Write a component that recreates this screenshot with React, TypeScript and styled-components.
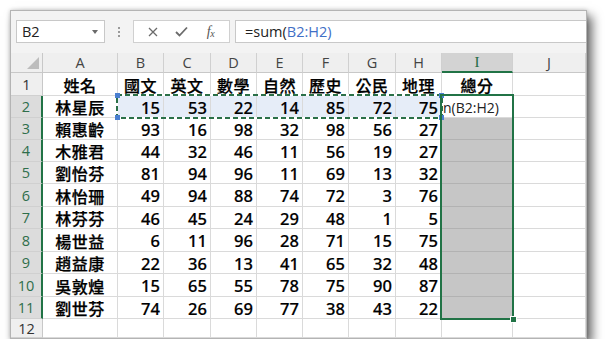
import React from "react";
import styled, { createGlobalStyle } from "styled-components";

const Global = createGlobalStyle`
  html, body { margin: 0; padding: 0; background: #ffffff; }
  body { font-family: "Open Sans", "Noto Sans CJK TC", sans-serif; }
`;

const Window = styled.div`
  margin: 10px 0 0 10px;
  width: 577px;
  height: 329px;
  box-sizing: border-box;
  border: 1px solid #b4b4b4;
  background: #ffffff;
  overflow: hidden;
  display: flex;
  flex-direction: column;
  box-shadow: 5px 6px 10px rgba(0, 0, 0, 0.6), 0 0 4px rgba(0, 0, 0, 0.2);
`;

const FormulaBar = styled.div`
  height: 42px;
  flex: none;
  display: flex;
  align-items: center;
  padding: 0 0 1px 5px;
  background: #f3f3f3;
  box-sizing: border-box;
`;

const NameBox = styled.div`
  width: 89px;
  height: 23px;
  box-sizing: border-box;
  border: 1px solid #c8c8c8;
  background: #ffffff;
  display: flex;
  align-items: center;
  justify-content: space-between;
  padding: 0 6px 0 5px;
  font-size: 14.5px;
  color: #222;
`;

const Caret = styled.span`
  width: 0;
  height: 0;
  border-left: 3.5px solid transparent;
  border-right: 3.5px solid transparent;
  border-top: 4px solid #6a6a6a;
`;

const Grip = styled.div`
  width: 28px;
  display: flex;
  flex-direction: column;
  align-items: center;
  gap: 2px;
`;

const GripDot = styled.span`
  width: 2px;
  height: 2px;
  background: #9a9a9a;
`;

const ButtonBox = styled.div`
  width: 97px;
  height: 23px;
  box-sizing: border-box;
  border: 1px solid #d0d0d0;
  background: #ffffff;
  display: flex;
  align-items: center;
  justify-content: space-around;
  padding: 0 4px;
`;

const IconSlot = styled.span`
  width: 20px;
  height: 20px;
  display: flex;
  align-items: center;
  justify-content: center;
  color: #6b6b6b;
`;

const Fx = styled.span`
  font-family: "Liberation Serif", serif;
  font-style: italic;
  font-size: 14px;
  color: #555;
  letter-spacing: -0.5px;
  & sub {
    font-size: 10px;
    vertical-align: -1px;
  }
`;

const FormulaInput = styled.div`
  flex: 1;
  height: 23px;
  margin-left: 5px;
  box-sizing: border-box;
  border: 1px solid #c8c8c8;
  border-right: none;
  background: #ffffff;
  display: flex;
  align-items: center;
  padding-left: 9px;
  font-size: 14.5px;
  color: #222;
  white-space: pre;
`;

const Ref = styled.span`
  color: #3f6fc6;
`;

const Grid = styled.div`
  flex: 1;
  display: grid;
  grid-template-columns: 32px 75px 46px 47px 46px 46px 46px 47px 46px 71px 1fr;
  grid-template-rows: 20px 23px 22px 22px 22px 22px 23px 22px 23px 22px 23px 22px 1fr;
`;

type Pos = { $r: number; $c: number };

const Cell = styled.div<Pos & { $align?: string; $bg?: string }>`
  grid-row: ${(p) => p.$r};
  grid-column: ${(p) => p.$c};
  box-sizing: border-box;
  border-right: 1px solid ${(p) => (p.$bg === "#c6c6c6" ? "#b2b2b2" : "#dadada")};
  border-bottom: 1px solid ${(p) => (p.$bg === "#c6c6c6" ? "#b2b2b2" : "#dadada")};
  background: ${(p) => p.$bg || "#ffffff"};
  display: flex;
  align-items: center;
  justify-content: ${(p) => p.$align || "flex-end"};
  padding: 1px 3px 0 3px;
  font-family: "Noto Sans", "Noto Sans CJK TC", sans-serif;
  font-size: 16.5px;
  font-weight: 500;
  -webkit-text-stroke: 0.2px #000;
  color: #000;
  white-space: nowrap;
  overflow: visible;
`;

const NameText = styled.span`
  font-family: "Noto Sans CJK TC", sans-serif;
  font-weight: 500;
  font-size: 16px;
  letter-spacing: 0.5px;
  -webkit-text-stroke: 0.25px #000;
`;

const EditText = styled.span`
  font-family: "Open Sans", sans-serif;
  font-size: 14px;
  font-weight: 400;
  -webkit-text-stroke: 0;
  color: #222;
  margin-left: -2px;
`;

const ColHead = styled.div<Pos & { $sel?: boolean }>`
  grid-row: ${(p) => p.$r};
  grid-column: ${(p) => p.$c};
  box-sizing: border-box;
  background: ${(p) => (p.$sel ? "#d3d3d3" : "#efefef")};
  border-right: 1px solid #d0d0d0;
  border-bottom: ${(p) => (p.$sel ? "2px solid #217346" : "1px solid #c8c8c8")};
  display: flex;
  align-items: center;
  justify-content: center;
  font-family: ${(p) => (p.$sel ? '"Liberation Serif", serif' : '"Open Sans", sans-serif')};
  font-size: ${(p) => (p.$sel ? "15px" : "14.5px")};
  color: ${(p) => (p.$sel ? "#216a44" : "#444")};
`;

const RowHead = styled.div<Pos & { $sel?: boolean }>`
  grid-row: ${(p) => p.$r};
  grid-column: ${(p) => p.$c};
  box-sizing: border-box;
  background: ${(p) => (p.$sel ? "#dcdcdc" : "#efefef")};
  border-bottom: 1px solid #d0d0d0;
  border-right: ${(p) => (p.$sel ? "2px solid #217346" : "1px solid #c8c8c8")};
  display: flex;
  align-items: center;
  justify-content: center;
  font-family: "Open Sans", sans-serif;
  font-size: 14.5px;
  line-height: 1;
  padding-top: 2px;
  color: ${(p) => (p.$sel ? "#2f6e4b" : "#333")};
`;

const Corner = styled.div`
  grid-row: 1;
  grid-column: 1;
  box-sizing: border-box;
  background: #efefef;
  border-right: 1px solid #c8c8c8;
  border-bottom: 1px solid #c8c8c8;
  display: flex;
  align-items: flex-end;
  justify-content: flex-end;
  padding: 0 3px 3px 0;
`;

const CornerTriangle = styled.span`
  width: 0;
  height: 0;
  border-left: 12px solid transparent;
  border-bottom: 12px solid #bdbdbd;
`;

const RefRange = styled.div`
  grid-row: 3;
  grid-column: 3 / 10;
  margin: -2px -1px -1px -2px;
  position: relative;
  pointer-events: none;
`;

const Ants = styled.svg`
  position: absolute;
  inset: 0;
  width: 100%;
  height: 100%;
  overflow: visible;
`;

const Handle = styled.span<{ $top?: boolean; $left?: boolean }>`
  position: absolute;
  width: 5px;
  height: 5px;
  background: #4a7fd0;
  ${(p) => (p.$top ? "top: -1px;" : "bottom: -1px;")}
  ${(p) => (p.$left ? "left: -1px;" : "right: -1px;")}
`;

const Selection = styled.div`
  grid-row: 3 / 13;
  grid-column: 10;
  margin: -2px -1px -1px -2px;
  border: 2px solid #217346;
  position: relative;
  pointer-events: none;
`;

const FillHandle = styled.span`
  position: absolute;
  right: -5px;
  bottom: -5px;
  width: 5px;
  height: 5px;
  background: #217346;
  border: 1px solid #ffffff;
`;

const heads = ["姓名", "國文", "英文", "數學", "自然", "歷史", "公民", "地理", "總分"];
const rows: [string, number[]][] = [
  ["林星辰", [15, 53, 22, 14, 85, 72, 75]],
  ["賴惠齡", [93, 16, 98, 32, 98, 56, 27]],
  ["木雅君", [44, 32, 46, 11, 56, 19, 27]],
  ["劉怡芬", [81, 94, 96, 11, 69, 13, 32]],
  ["林怡珊", [49, 94, 88, 74, 72, 3, 76]],
  ["林芬芬", [46, 45, 24, 29, 48, 1, 5]],
  ["楊世益", [6, 11, 96, 28, 71, 15, 75]],
  ["趙益康", [22, 36, 13, 41, 65, 32, 48]],
  ["吳敦煌", [15, 65, 55, 78, 75, 90, 87]],
  ["劉世芬", [74, 26, 69, 77, 38, 43, 22]],
];
const letters = ["A", "B", "C", "D", "E", "F", "G", "H", "I", "J"];

export default function App() {
  const cells: React.ReactNode[] = [];
  cells.push(<Corner key="corner"><CornerTriangle /></Corner>);
  letters.forEach((l, i) => {
    cells.push(
      <ColHead key={"h" + l} $r={1} $c={i + 2} $sel={l === "I"}>
        {l}
      </ColHead>
    );
  });
  cells.push(<RowHead key="r1" $r={2} $c={1}>1</RowHead>);
  heads.forEach((h, i) => {
    cells.push(
      <Cell key={"t" + i} $r={2} $c={i + 2} $align="center">
        <NameText>{h}</NameText>
      </Cell>
    );
  });
  cells.push(<Cell key="t-j" $r={2} $c={11} />);
  rows.forEach(([name, nums], ri) => {
    const r = ri + 3;
    cells.push(
      <RowHead key={"r" + r} $r={r} $c={1} $sel>
        {ri + 2}
      </RowHead>
    );
    cells.push(
      <Cell key={"n" + r} $r={r} $c={2} $align="center">
        <NameText>{name}</NameText>
      </Cell>
    );
    nums.forEach((n, ci) => {
      cells.push(
        <Cell key={r + "-" + ci} $r={r} $c={ci + 3} $bg={ri === 0 ? "#e6edf8" : undefined}>
          {n}
        </Cell>
      );
    });
    cells.push(
      <Cell key={"i" + r} $r={r} $c={10} $align="flex-start" $bg={ri === 0 ? "#ffffff" : "#c6c6c6"}>
        {ri === 0 ? <EditText>n(B2:H2)</EditText> : null}
      </Cell>
    );
    cells.push(<Cell key={"j" + r} $r={r} $c={11} />);
  });
  cells.push(<RowHead key="r12" $r={13} $c={1}>12</RowHead>);
  for (let c = 2; c <= 11; c++) cells.push(<Cell key={"e" + c} $r={13} $c={c} />);

  return (
    <>
      <Global />
      <Window>
        <FormulaBar>
          <NameBox>
            B2
            <Caret />
          </NameBox>
          <Grip>
            <GripDot />
            <GripDot />
            <GripDot />
          </Grip>
          <ButtonBox>
            <IconSlot>
              <svg width="10" height="10" viewBox="0 0 10 10">
                <path d="M1 1 L9 9 M9 1 L1 9" stroke="#6b6b6b" strokeWidth="1.3" />
              </svg>
            </IconSlot>
            <IconSlot>
              <svg width="13" height="11" viewBox="0 0 13 11">
                <path d="M1 6 L4.5 9.5 L12 1.5" stroke="#6b6b6b" strokeWidth="1.8" fill="none" />
              </svg>
            </IconSlot>
            <IconSlot>
              <Fx>
                f<sub>x</sub>
              </Fx>
            </IconSlot>
          </ButtonBox>
          <FormulaInput>
            =sum(<Ref>B2:H2)</Ref>
          </FormulaInput>
        </FormulaBar>
        <Grid>
          {cells}
          <RefRange>
            <Ants preserveAspectRatio="none">
              <rect x="1" y="1" width="calc(100% - 2px)" height="calc(100% - 2px)" fill="none" stroke="#ffffff" strokeWidth="2" />
              <rect x="1" y="1" width="calc(100% - 2px)" height="calc(100% - 2px)" fill="none" stroke="#2b7048" strokeWidth="2" strokeDasharray="5 3" />
            </Ants>
            <Handle $top $left />
            <Handle $left />
            <Handle $top />
            <Handle />
          </RefRange>
          <Selection>
            <FillHandle />
          </Selection>
        </Grid>
      </Window>
    </>
  );
}
